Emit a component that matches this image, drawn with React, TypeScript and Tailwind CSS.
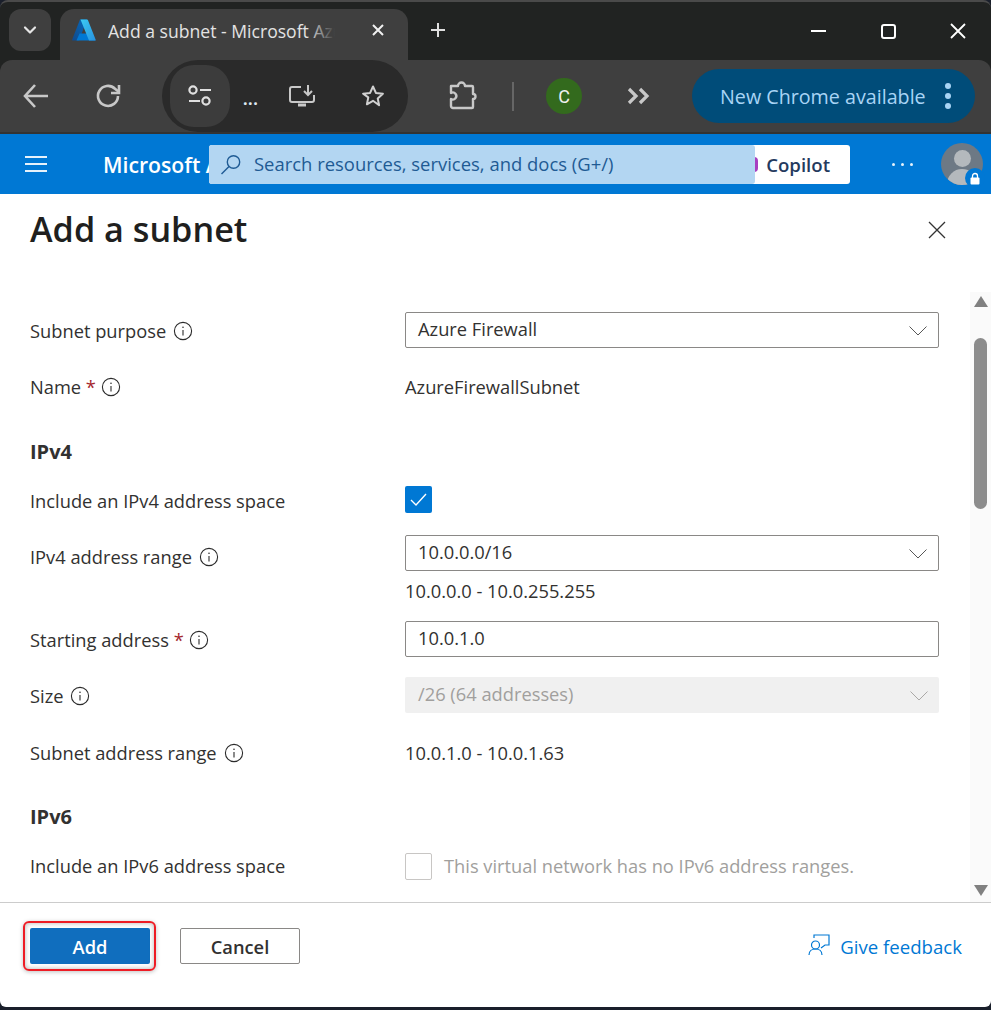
import React from "react";

const Info = () => (
  <svg width="20" height="20" viewBox="0 0 20 20" fill="none" stroke="#2b2b2b" strokeWidth="1.1" className="shrink-0">
    <circle cx="10" cy="10" r="8.6" />
    <path d="M10 9v5.4" />
    <circle cx="10" cy="6.3" r="0.8" fill="#2b2b2b" stroke="none" />
  </svg>
);

const Chevron = ({ color = "#444" }: { color?: string }) => (
  <svg width="20" height="12" viewBox="0 0 20 12" fill="none" stroke={color} strokeWidth="0.9" className="mt-[3px] mr-[1px]">
    <path d="M1.5 1.500 10 10l8.500-8.500" />
  </svg>
);

const Label = ({ text, req, pad = "pt-[2px]" }: { text: string; req?: boolean; pad?: string }) => (
  <div className={`w-[375px] shrink-0 flex items-center gap-[7px] text-[18.3px] text-[#323130] ${pad}`}>
    <span className={req ? "-mr-[1.5px]" : ""}>
      {text}
      {req && <span className="text-[#a4262c]"> *</span>}
    </span>
    <Info />
  </div>
);

const Box = ({ text, select = true }: { text: string; select?: boolean }) => (
  <div className="w-[534px] h-[36px] border border-[#8a8886] rounded-[2px] flex items-center justify-between pl-[12px] pr-[9px] text-[18.3px] text-[#323130] pb-[2px]">
    <span>{text}</span>
    {select && <Chevron />}
  </div>
);

export default function App() {
  return (
    <div
      className="w-[991px] h-[1010px] flex flex-col overflow-hidden bg-[#1a1f2b]"
      style={{ fontFamily: '"Open Sans", "Noto Sans", sans-serif' }}
    >
      {/* Tab strip */}
      <div className="h-[60px] shrink-0 bg-[#212322] border-t-[2px] border-[#4a4a4a] rounded-t-[8px] flex items-start relative">
        <div className="ml-[9px] mt-[7px] w-[42px] h-[42px] rounded-[12px] bg-[#3f3f3f] flex items-center justify-center">
          <svg width="14" height="10" viewBox="0 0 14 10" fill="none" stroke="#e6e6e6" strokeWidth="2.2" strokeLinecap="round" strokeLinejoin="round">
            <path d="M2 2.500 7 7.500l5-5" />
          </svg>
        </div>
        <div className="ml-[9px] mt-[7px] w-[348px] h-[51px] rounded-t-[14px] bg-[#3f3f3f] flex items-start relative">
          <svg width="24" height="22" viewBox="0 0 24 22" className="ml-[12px] mt-[10px] shrink-0">
            <defs>
              <linearGradient id="az1" x1="0" y1="1" x2="1" y2="0">
                <stop offset="0" stopColor="#114a8b" />
                <stop offset="1" stopColor="#0669bc" />
              </linearGradient>
              <linearGradient id="az2" x1="0" y1="0" x2="1" y2="1">
                <stop offset="0" stopColor="#3ccbf4" />
                <stop offset="1" stopColor="#2892df" />
              </linearGradient>
            </defs>
            <path d="M8 .5h7L7 21.500H.5a.5.5 0 0 1-.4-.7Z" fill="url(#az1)" />
            <path d="M18.500 14.500H7.500l-3 7h19Z" fill="#0078d4" />
            <path d="M8.500.5h6.500a1 1 0 0 1 1 .7l7.700 19.600a.5.5 0 0 1-.4.7H17L8.500.5Z" fill="url(#az2)" />
          </svg>
          <div className="ml-[12px] mt-[10px] w-[227px] relative overflow-hidden whitespace-nowrap text-[17.6px] leading-[24px] text-[#e3e3e3]">
            Add a subnet - Microsoft Azure
            <div className="absolute right-0 top-0 bottom-0 w-[28px] bg-gradient-to-r from-transparent to-[#3f3f3f]" />
          </div>
          <svg width="14" height="14" viewBox="0 0 14 14" fill="none" stroke="#f0f0f0" strokeWidth="2" className="ml-[36px] mt-[14px] shrink-0">
            <path d="M2 2l10 10M12 2 2 12" />
          </svg>
        </div>
        <svg width="16" height="16" viewBox="0 0 16 16" fill="none" stroke="#e0e0e0" strokeWidth="2" className="ml-[22px] mt-[20px] shrink-0">
          <path d="M8 1v14M1 8h14" />
        </svg>
        <div className="ml-auto flex items-center mt-[21px] mr-[25px]">
          <div className="w-[15px] h-[2px] bg-white mr-[55px]" />
          <div className="w-[15px] h-[15px] border-[2px] border-white rounded-[3px] mr-[54px]" />
          <svg width="16" height="16" viewBox="0 0 16 16" fill="none" stroke="#fff" strokeWidth="1.8">
            <path d="M1 1l14 14M15 1 1 15" />
          </svg>
        </div>
      </div>

      {/* Toolbar */}
      <div className="h-[74px] shrink-0 bg-[#212322]">
        <div className="h-[74px] bg-[#3f3f3f] rounded-tl-[12px] rounded-tr-[12px] flex items-center border-b-[2px] border-[#333]">
          <svg width="26" height="26" viewBox="0 0 26 26" fill="none" stroke="#c8c8c8" strokeWidth="2.6" className="ml-[23px] shrink-0">
            <path d="M25 13H2M12 2 2 13l10 11" />
          </svg>
          <svg width="26" height="26" viewBox="0 0 26 26" fill="none" stroke="#c8c8c8" strokeWidth="2.6" className="ml-[46px] shrink-0">
            <path d="M23 13a10 10 0 1 1-3-7.200L24 9" />
            <path d="M24 2v8h-8" />
          </svg>
          <div className="ml-[41px] w-[246px] h-[72px] rounded-[36px] bg-[#2a2a2a] flex items-center shrink-0">
            <div className="ml-[8px] w-[60px] h-[62px] rounded-[24px] bg-[#3c3c3c] flex items-center justify-center">
              <svg width="24" height="22" viewBox="0 0 24 22" fill="none" stroke="#e0e0e0" strokeWidth="2.2">
                <circle cx="5" cy="5" r="3.600" />
                <path d="M12 5h11M1 16h11" />
                <circle cx="18" cy="16" r="3.600" />
              </svg>
            </div>
            <span className="ml-[13px] mt-[6px] text-[#dfe9f2] text-[16px] font-bold leading-none tracking-[0.5px]">...</span>
            <svg width="26" height="24" viewBox="0 0 26 24" fill="none" stroke="#c8c8c8" strokeWidth="2" className="ml-[31px] shrink-0">
              <path d="M12 3H3a2 2 0 0 0-2 2v11a2 2 0 0 0 2 2h20a2 2 0 0 0 2-2v-5" />
              <path d="M19 1v10M15 7l4 4 4-4" />
              <path d="M9 21h8" strokeWidth="3" />
            </svg>
            <svg width="24" height="24" viewBox="0 0 24 24" fill="none" stroke="#d0d0d0" strokeWidth="2" strokeLinejoin="round" className="ml-[46px] shrink-0">
              <path d="M12 2.500l2.900 6.400 7 .8-5.200 4.700 1.400 6.900L12 16.800l-6.100 3.500 1.400-6.900L2.100 9.700l7-.8Z" />
            </svg>
          </div>
          <svg width="30" height="30" viewBox="0 0 30 30" fill="none" stroke="#c8c8c8" strokeWidth="2.4" strokeLinejoin="round" className="ml-[40px] shrink-0">
            <path d="M3 5h7a3.500 3.500 0 1 1 7 0h7a1 1 0 0 1 1 1v7a2.500 2.500 0 0 1 0 5v8a1 1 0 0 1-1 1H5a2 2 0 0 1-2-2v-7a3.500 3.500 0 1 0 0-6Z" />
          </svg>
          <div className="ml-[34px] w-[2px] h-[29px] bg-[#666] shrink-0" />
          <div className="ml-[32px] w-[36px] h-[36px] rounded-full bg-[#336a1d] flex items-center justify-center text-[18px] text-[#f0f0f0] shrink-0" style={{ fontFamily: "Roboto, sans-serif" }}>
            C
          </div>
          <svg width="24" height="18" viewBox="0 0 24 18" fill="none" stroke="#c8c8c8" strokeWidth="3.2" className="ml-[45px] shrink-0">
            <path d="M2 2l7 7-7 7M13 2l7 7-7 7" />
          </svg>
          <div className="ml-[41px] w-[283px] h-[54px] rounded-[27px] bg-[#004c79] flex items-center shrink-0 text-[#a8d4f5] text-[19.7px]">
            <span className="ml-[28px] pt-[1px] whitespace-nowrap">New Chrome available</span>
            <div className="ml-auto mr-[24px] flex flex-col gap-[4px]">
              <div className="w-[6px] h-[6px] rounded-full bg-[#a8d4f5]" />
              <div className="w-[6px] h-[6px] rounded-full bg-[#a8d4f5]" />
              <div className="w-[6px] h-[6px] rounded-full bg-[#a8d4f5]" />
            </div>
          </div>
        </div>
      </div>

      {/* Azure bar */}
      <div className="h-[60px] shrink-0 bg-[#0078d4] flex items-center relative">
        <div className="ml-[25px] w-[22px] flex flex-col gap-[5px] shrink-0">
          <div className="h-[2px] bg-[#e6f2fb]" />
          <div className="h-[2px] bg-[#e6f2fb]" />
          <div className="h-[2px] bg-[#e6f2fb]" />
        </div>
        <span className="ml-[56px] pt-[2px] text-white text-[21.2px] font-semibold whitespace-nowrap">Microsoft Azure</span>
        <div className="absolute left-[209px] top-[11px] h-[39px] w-[641px] rounded-[3px] bg-white flex items-center justify-end pr-[20px] text-[18.6px] font-semibold text-[#243a5e]">
          Copilot
          <div className="absolute left-[540px] top-[12px] w-[9px] h-[15px] rounded-[4px] bg-[#a83fc0]" />
        </div>
        <div className="absolute left-[209px] top-[11px] h-[39px] w-[546px] rounded-[3px] bg-[#b3d6f2] flex items-center text-[#1f5b94] text-[18.45px]">
          <svg width="22" height="22" viewBox="0 0 22 22" fill="none" stroke="#1f5b94" strokeWidth="1.400" className="ml-[11px] shrink-0">
            <circle cx="13.500" cy="8" r="6.200" />
            <path d="M9 12.500 1.500 20" />
          </svg>
          <span className="ml-[12px] pb-[1px] whitespace-nowrap">Search resources, services, and docs (G+/)</span>
        </div>
        <div className="absolute left-[892px] top-[29px] flex gap-[6px]">
          <div className="w-[3px] h-[3px] rounded-full bg-[#e6f2fb]" />
          <div className="w-[3px] h-[3px] rounded-full bg-[#e6f2fb]" />
          <div className="w-[3px] h-[3px] rounded-full bg-[#e6f2fb]" />
        </div>
        <div className="absolute left-[941px] top-[9px] w-[42px] h-[42px] rounded-full bg-[#6d7985] overflow-hidden">
          <div className="mx-auto mt-[7px] w-[17px] h-[17px] rounded-full bg-[#b4b9bd]" />
          <div className="mx-auto mt-[2px] w-[30px] h-[20px] rounded-t-full bg-[#b4b9bd]" />
        </div>
        <div className="absolute left-[965px] top-[34px] w-[20px] h-[20px] rounded-full bg-[#0078d4] flex items-center justify-center">
          <svg width="10" height="13" viewBox="0 0 10 13">
            <path d="M2.500 6V4a2.500 2.500 0 0 1 5 0v2" fill="none" stroke="#fff" strokeWidth="1.300" />
            <rect x="0.500" y="5.500" width="9" height="7" rx="1" fill="#fff" />
          </svg>
        </div>
      </div>

      {/* Panel */}
      <div className="h-[813px] shrink-0 bg-white rounded-b-[6px] flex flex-col overflow-hidden">
        <div className="h-[98px] shrink-0 flex items-start justify-between pl-[30px] pr-[44px]">
          <h1 className="mt-[10px] text-[34.2px] leading-[50px] font-semibold text-[#201f1e]">Add a subnet</h1>
          <svg width="20" height="20" viewBox="0 0 20 20" fill="none" stroke="#333" strokeWidth="1.300" className="mt-[26px]">
            <path d="M2 2l16 16M18 2 2 18" />
          </svg>
        </div>

        <div className="h-[610px] shrink-0 flex">
          <div className="flex-1 pl-[30px] flex flex-col">
            <div className="mt-[20px] h-[36px] flex items-center">
              <Label text="Subnet purpose" />
              <Box text="Azure Firewall" />
            </div>
            <div className="mt-[21px] h-[36px] flex items-center">
              <Label text="Name" req pad="pt-0" />
              <span className="text-[18.3px] text-[#323130]">AzureFirewallSubnet</span>
            </div>
            <div className="mt-[31px] pt-[1px] h-[30px] flex items-center text-[20px] font-bold text-[#323130]">IPv4</div>
            <div className="mt-[17px] h-[36px] flex items-center">
              <div className="w-[375px] shrink-0 text-[18.3px] text-[#323130]">Include an IPv4 address space</div>
              <div className="w-[27px] h-[27px] mb-[4px] rounded-[2px] bg-[#0078d4] flex items-center justify-center">
                <svg width="17" height="13" viewBox="0 0 17 13" fill="none" stroke="#fff" strokeWidth="1.400">
                  <path d="M1 7l5 5L16 1" />
                </svg>
              </div>
            </div>
            <div className="mt-[16px] h-[36px] flex items-center">
              <Label text="IPv4 address range" pad="pt-[7px]" />
              <Box text="10.0.0.0/16" />
            </div>
            <div className="h-[40px] pl-[375px] flex items-center text-[18.3px] text-[#323130]">10.0.0.0 - 10.0.255.255</div>
            <div className="mt-[10px] h-[36px] flex items-center">
              <Label text="Starting address" req />
              <Box text="10.0.1.0" select={false} />
            </div>
            <div className="mt-[20px] h-[36px] flex items-center">
              <Label text="Size" />
              <div className="w-[534px] h-[36px] rounded-[2px] bg-[#f0f0f0] flex items-center justify-between pl-[13px] pr-[9px] pb-[2px] text-[18.3px] text-[#a19f9d]">
                <span>/26 (64 addresses)</span>
                <Chevron color="#a19f9d" />
              </div>
            </div>
            <div className="mt-[22px] h-[36px] flex items-center">
              <Label text="Subnet address range" pad="pt-0" />
              <span className="text-[18.3px] text-[#323130]">10.0.1.0 - 10.0.1.63</span>
            </div>
            <div className="mt-[31px] h-[30px] flex items-center text-[20px] font-bold text-[#323130]">IPv6</div>
            <div className="mt-[16px] h-[36px] flex items-center">
              <div className="w-[375px] shrink-0 text-[18.3px] text-[#323130]">Include an IPv6 address space</div>
              <div className="w-[27px] h-[27px] rounded-[2px] border border-[#c8c6c4] bg-white" />
              <span className="ml-[12px] text-[18.3px] text-[#a19f9d]">This virtual network has no IPv6 address ranges.</span>
            </div>
          </div>
          <div className="w-[21px] shrink-0 bg-[#fafafa] flex flex-col items-center">
            <div className="mt-[4px] w-0 h-0 border-l-[7px] border-r-[7px] border-b-[11px] border-l-transparent border-r-transparent border-b-[#808080]" />
            <div className="mt-[31px] w-[13px] h-[171px] rounded-[7px] bg-[#8c8c8c]" />
            <div className="mt-auto mb-[6px] w-0 h-0 border-l-[7px] border-r-[7px] border-t-[11px] border-l-transparent border-r-transparent border-t-[#808080]" />
          </div>
        </div>

        <div className="flex-1 border-t border-[#ccc] flex items-start pl-[30px] pr-[29px]">
          <div className="mt-[25px] pt-[1px] relative w-[120px] h-[36px] rounded-[2px] bg-[#106ebe] flex items-center justify-center text-[18.3px] font-semibold text-white">
            Add
            <div className="absolute -left-[7px] -right-[6px] -top-[7px] -bottom-[7px] border-[2px] border-[#ee1c25] rounded-[6px] shadow-[inset_0_0_5px_rgba(0,0,0,0.3),0_1px_4px_rgba(0,0,0,0.25)]" />
          </div>
          <div className="mt-[25px] pt-[1px] ml-[30px] w-[120px] h-[36px] rounded-[2px] border border-[#8a8886] flex items-center justify-center text-[18.3px] font-semibold text-[#323130]">
            Cancel
          </div>
          <div className="ml-auto mt-[30px] flex items-center gap-[10px] text-[18.6px] text-[#0078d4]">
            <svg width="22" height="22" viewBox="0 0 22 22" fill="none" stroke="#0078d4" strokeWidth="1.200" className="mb-[4px]">
              <path d="M6 4V1h15v10h-4l-4 3" />
              <circle cx="7.500" cy="11" r="4" />
              <path d="M1 21c0-4 3-6 6.500-6s6.500 2 6.500 6" />
            </svg>
            <span>Give feedback</span>
          </div>
        </div>
      </div>
    </div>
  );
}
